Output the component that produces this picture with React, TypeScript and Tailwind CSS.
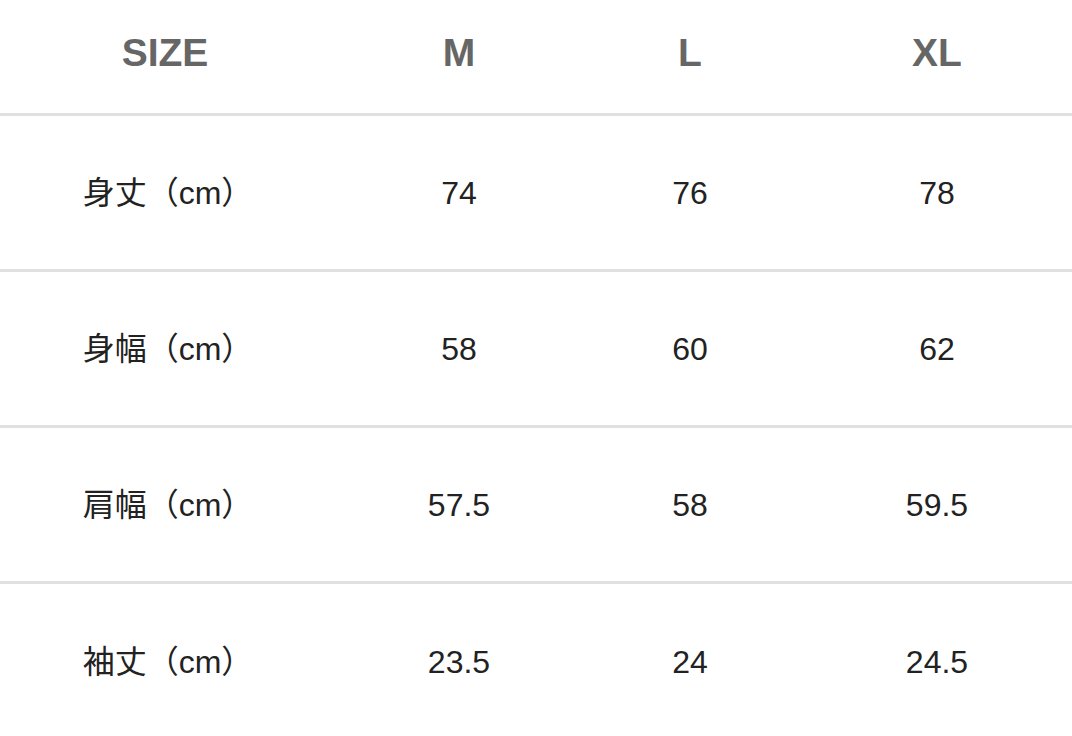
import React from "react";

const rows: [string, string, string, string][] = [
  ["身丈（cm）", "74", "76", "78"],
  ["身幅（cm）", "58", "60", "62"],
  ["肩幅（cm）", "57.5", "58", "59.5"],
  ["袖丈（cm）", "23.5", "24", "24.5"],
];

const font = { fontFamily: '"Liberation Sans", "Noto Sans CJK JP", sans-serif' };

export default function App() {
  return (
    <div className="w-[1072px] h-[736px] overflow-hidden bg-white" style={font}>
      <div className="grid grid-cols-[330px_258px_204px_280px] h-[116px] items-center pb-[6px] text-[39px] font-bold text-[#666666] border-b-[3px] border-[#e0e0e0]">
        <div className="text-center">SIZE</div>
        <div className="text-center">M</div>
        <div className="text-center">L</div>
        <div className="text-center pl-[10px]">XL</div>
      </div>
      {rows.map((r, i) => (
        <div
          key={i}
          className={`grid grid-cols-[330px_258px_204px_280px] h-[156px] items-center text-[32px] text-[#222222] ${i < rows.length - 1 ? "border-b-[3px] border-[#e0e0e0]" : ""}`}
        >
          <div className="text-center pl-[6px]">{r[0]}</div>
          <div className="text-center">{r[1]}</div>
          <div className="text-center">{r[2]}</div>
          <div className="text-center pl-[10px]">{r[3]}</div>
        </div>
      ))}
    </div>
  );
}
